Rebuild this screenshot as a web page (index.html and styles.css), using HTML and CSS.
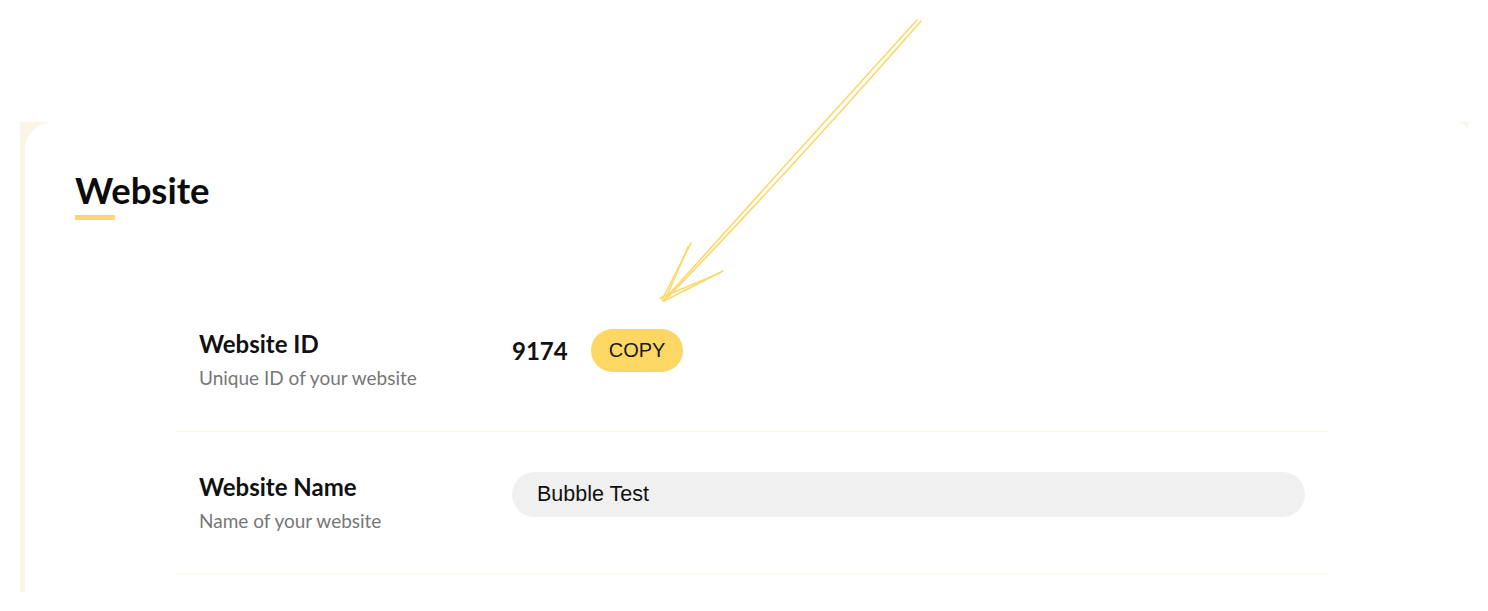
FILE: index.html
```html
<!DOCTYPE html>
<html lang="en">
<head>
  <meta charset="UTF-8" />
  <title>Website settings</title>
  <link rel="stylesheet" href="styles.css">
</head>
<body>
<main class="page">
  <section class="panel">
    <div class="card">
      <h1 class="card-title">Website</h1>

      <div class="settings">
        <div class="setting-row">
          <div class="setting-label">
            <h3>Website ID</h3>
            <p>Unique ID of your website</p>
          </div>
          <div class="setting-value">
            <span class="site-id">9174</span>
            <button class="copy-button">COPY</button>
          </div>
        </div>

        <div class="setting-row">
          <div class="setting-label">
            <h3>Website Name</h3>
            <p>Name of your website</p>
          </div>
          <div class="setting-value">
            <input class="text-input" type="text" value="Bubble Test" />
          </div>
        </div>
      </div>
    </div>
  </section>

  <!-- hand drawn pointer -->
  <svg class="pointer" width="1488" height="611" viewBox="0 0 1488 611">
    <g fill="none" stroke="#fcd86a" stroke-width="1.6" stroke-linecap="round">
      <path d="M917 20 C 840 105, 740 215, 663 301" />
      <path d="M921 21 C 845 108, 748 214, 668 297" />
      <path d="M691 243 L 662 300" />
      <path d="M688 247 L 666 298" />
      <path d="M723 271 L 664 301" />
      <path d="M720 273 L 660 298" />
    </g>
  </svg>
</main>
</body>
</html>
```

FILE: styles.css
```css
body {
  margin: 0;
  background-color: white;
  font-family: Lato, "Noto Sans", sans-serif;
  color: #111;
}

.page {
  position: relative;
  height: 611px;
  overflow: hidden;
  padding-top: 122px;
  box-sizing: border-box;
}

.panel {
  margin-left: 20px;
  width: 1448px;
  height: 470px;
  background-color: #faf6e7;
  padding-left: 5px;
  box-sizing: border-box;
}

.card {
  background-color: white;
  height: 520px;
  border-radius: 28px 10px 0 0;
  padding: 47px 0 0 50px;
  box-sizing: border-box;
}

.card-title {
  display: inline-block;
  position: relative;
  margin: 0;
  font-size: 36.5px;
  line-height: 42px;
  font-weight: 700;
  color: #0c0c0c;
}

.card-title::after {
  content: "";
  position: absolute;
  left: 0;
  top: 46px;
  width: 40px;
  height: 5px;
  background-color: #fcd86a;
}

.settings {
  width: 1153px;
  margin-left: 100px;
  margin-top: 78px;
}

.setting-row {
  display: flex;
  align-items: flex-start;
  padding: 40px 23px 39px 24px;
  border-bottom: 2px solid #fdfaee;
}

.setting-label {
  width: 313px;
  flex-shrink: 0;
}

.setting-label h3 {
  margin: 0;
  font-size: 24px;
  line-height: 30px;
  font-weight: 700;
  color: #111;
}

.setting-label p {
  margin: 6px 0 0 0;
  font-size: 19px;
  line-height: 26px;
  color: #777;
}

.setting-value {
  flex: 1;
  display: flex;
  align-items: center;
}

.site-id {
  font-size: 24px;
  font-weight: 700;
  color: #111;
  margin-right: 23px;
}

.copy-button {
  font-family: "Liberation Sans", Arial, sans-serif;
  font-size: 20px;
  height: 43px;
  padding: 0 18px;
  border: none;
  border-radius: 22px;
  background-color: #fdd764;
  color: #1a1a1a;
}

.text-input {
  width: 100%;
  height: 45px;
  padding: 0 25px;
  box-sizing: border-box;
  border: none;
  border-radius: 23px;
  background-color: #f0f0f0;
  font-family: "Liberation Sans", Arial, sans-serif;
  font-size: 21.5px;
  color: #111;
  outline: none;
}

.pointer {
  position: absolute;
  left: 0;
  top: 0;
  pointer-events: none;
}
```
